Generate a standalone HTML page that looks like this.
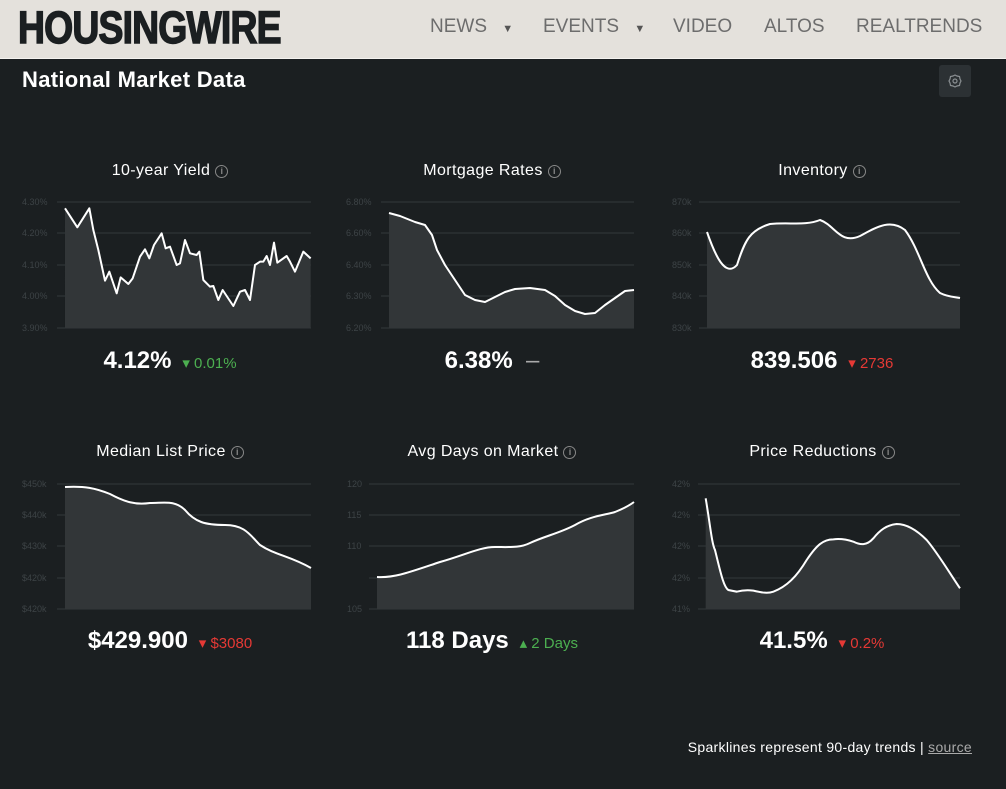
<!DOCTYPE html>
<html><head><meta charset="utf-8"><style>
body{margin:0;width:1006px;height:789px;background:#1b1f21;overflow:hidden;font-family:"Liberation Sans",sans-serif;position:relative}
.hdr{position:absolute;left:0;top:0;width:1006px;height:58px;background:#e4e1dc;border-bottom:1px solid #f4f2ef}
.logo{position:absolute;left:18px;top:5px;font-weight:bold;font-size:45px;color:#1b1f21;transform:scaleX(0.83);transform-origin:left top;letter-spacing:-1px;line-height:45px;-webkit-text-stroke:1.5px #1b1f21}
.nav{position:absolute;top:16px;font-size:19px;color:#6d6d6d}
.t{position:absolute;color:#fff;font-size:16px;letter-spacing:0.4px;text-align:center;width:300px}
.v{position:absolute;color:#fff;font-weight:bold;font-size:24px;text-align:center;width:300px}
.g{color:#4caf50;font-weight:normal;font-size:15px}
.r{color:#e53935;font-weight:normal;font-size:15px}
.i{display:inline-block;width:11px;height:11px;border:1px solid #888;border-radius:50%;font-size:9px;line-height:11px;color:#888;vertical-align:1px;margin-left:5px;font-weight:bold;letter-spacing:0}
.lb{font-family:"Liberation Sans",sans-serif;font-size:9px;fill:#3d4346}
</style></head><body>
<div class="hdr">
<div class="logo">HOUSINGWIRE</div>
<div class="nav" style="left:430px">NEWS <span style="font-size:11px;margin-left:10px;color:#555">▼</span></div>
<div class="nav" style="left:543px">EVENTS <span style="font-size:11px;margin-left:10px;color:#555">▼</span></div>
<div class="nav" style="left:673px">VIDEO</div>
<div class="nav" style="left:764px">ALTOS</div>
<div class="nav" style="left:856px">REALTRENDS</div>
</div>
<div style="position:absolute;left:22px;top:67px;color:#fff;font-weight:bold;font-size:22px;letter-spacing:0.3px">National Market Data</div>
<div style="position:absolute;left:939px;top:65px;width:32px;height:32px;background:#2c3134;border-radius:3px"></div>
<svg style="position:absolute;left:947px;top:73px" width="16" height="16" viewBox="0 0 16 16"><path d="M8 2 L10 3 L12.5 3.5 L13 6 L14 8 L13 10 L12.5 12.5 L10 13 L8 14 L6 13 L3.5 12.5 L3 10 L2 8 L3 6 L3.5 3.5 L6 3 Z" fill="none" stroke="#8a8f92" stroke-width="1.2"/><circle cx="8" cy="8" r="2" fill="none" stroke="#8a8f92" stroke-width="1.2"/></svg>

<div class="t" style="left:20px;top:162px">10-year Yield<span class="i">i</span></div>
<div class="t" style="left:342px;top:162px">Mortgage Rates<span class="i">i</span></div>
<div class="t" style="left:672px;top:162px">Inventory<span class="i">i</span></div>
<div class="t" style="left:20px;top:443px">Median List Price<span class="i">i</span></div>
<div class="t" style="left:342px;top:443px">Avg Days on Market<span class="i">i</span></div>
<div class="t" style="left:672px;top:443px">Price Reductions<span class="i">i</span></div>

<div class="v" style="left:20px;top:347px">4.12% <span class="g">&nbsp;▾ 0.01%</span></div>
<div class="v" style="left:342px;top:347px">6.38% <span style="color:#aaa;font-weight:normal">&nbsp;–</span></div>
<div class="v" style="left:672px;top:347px">839.506 <span class="r">&nbsp;▾ 2736</span></div>
<div class="v" style="left:20px;top:627px">$429.900 <span class="r">&nbsp;▾ $3080</span></div>
<div class="v" style="left:342px;top:627px">118 Days <span class="g">&nbsp;▴ 2 Days</span></div>
<div class="v" style="left:672px;top:627px">41.5% <span class="r">&nbsp;▾ 0.2%</span></div>

<svg style="position:absolute;left:0;top:0" width="1006" height="789">
<g stroke="#33393c" stroke-width="1">
<path d="M57 202H311M57 233H311M57 265H311M57 296H311M57 328H311"/>
<path d="M381 202H634M381 233H634M381 265H634M381 296H634M381 328H634"/>
<path d="M699 202H960M699 233H960M699 265H960M699 296H960M699 328H960"/>
<path d="M57 484H311M57 515H311M57 546H311M57 578H311M57 609H311"/>
<path d="M369 484H634M369 515H634M369 546H634M369 578H634M369 609H634"/>
<path d="M698 484H960M698 515H960M698 546H960M698 578H960M698 609H960"/>
</g>
<g class="lb">
<text x="22" y="205">4.30%</text><text x="22" y="236">4.20%</text><text x="22" y="268">4.10%</text><text x="22" y="299">4.00%</text><text x="22" y="331">3.90%</text>
<text x="346" y="205">6.80%</text><text x="346" y="236">6.60%</text><text x="346" y="268">6.40%</text><text x="346" y="299">6.30%</text><text x="346" y="331">6.20%</text>
<text x="672" y="205">870k</text><text x="672" y="236">860k</text><text x="672" y="268">850k</text><text x="672" y="299">840k</text><text x="672" y="331">830k</text>
<text x="22" y="487">$450k</text><text x="22" y="518">$440k</text><text x="22" y="549">$430k</text><text x="22" y="581">$420k</text><text x="22" y="612">$420k</text>
<text x="347" y="487">120</text><text x="347" y="518">115</text><text x="347" y="549">110</text><text x="347" y="612">105</text>
<text x="672" y="487">42%</text><text x="672" y="518">42%</text><text x="672" y="549">42%</text><text x="672" y="581">42%</text><text x="672" y="612">41%</text>
</g>
<g transform="translate(0,150) scale(0.33333)">
<path d="M195,175 L232,232 L268,175 L280,240 L295,300 L315,392 L328,365 L350,430 L362,382 L385,402 L398,385 L420,320 L435,298 L448,325 L462,285 L485,250 L497,295 L510,290 L530,345 L540,340 L555,270 L570,310 L590,315 L598,305 L610,390 L630,410 L640,408 L655,450 L668,420 L700,468 L720,425 L735,420 L750,450 L765,345 L780,335 L790,335 L800,318 L810,345 L822,278 L832,338 L860,318 L870,335 L885,365 L910,305 L932,325 L932,535 L195,535Z" fill="#323638"/>
<path d="M195,175 L232,232 L268,175 L280,240 L295,300 L315,392 L328,365 L350,430 L362,382 L385,402 L398,385 L420,320 L435,298 L448,325 L462,285 L485,250 L497,295 L510,290 L530,345 L540,340 L555,270 L570,310 L590,315 L598,305 L610,390 L630,410 L640,408 L655,450 L668,420 L700,468 L720,425 L735,420 L750,450 L765,345 L780,335 L790,335 L800,318 L810,345 L822,278 L832,338 L860,318 L870,335 L885,365 L910,305 L932,325" fill="none" stroke="#fff" stroke-width="6" stroke-linejoin="round"/>
</g>
<g transform="translate(660,470) scale(0.33333)">
<path d="M137,85 C150,160 155,220 165,240 C180,300 190,350 205,360 L230,365 C250,360 265,360 280,362 C300,366 320,372 340,365 C380,350 410,320 440,270 C470,225 490,208 520,208 C545,205 565,210 580,215 C600,225 620,228 640,205 C660,180 680,165 710,162 C740,162 770,180 800,210 C830,245 860,295 900,355 L900,418 L137,418Z" fill="#323638"/>
<path d="M137,85 C150,160 155,220 165,240 C180,300 190,350 205,360 L230,365 C250,360 265,360 280,362 C300,366 320,372 340,365 C380,350 410,320 440,270 C470,225 490,208 520,208 C545,205 565,210 580,215 C600,225 620,228 640,205 C660,180 680,165 710,162 C740,162 770,180 800,210 C830,245 860,295 900,355" fill="none" stroke="#fff" stroke-width="6"/>
</g>
<g fill="#323638">
<path d="M389,213 L400,216 L415,222 L425,225 L432,235 L437,250 L445,265 L455,280 L465,295 L475,300 L485,302 L495,297 L505,292 L515,289 L530,288 L545,290 L555,296 L565,305 L575,311 L585,314 L595,313 L605,305 L615,298 L625,291 L634,290 L634,328 L389,328Z"/>
<path d="M707,232 C715,255 725,278 737,265 C745,240 750,230 770,224 C790,222 805,226 820,220 C835,225 840,245 860,236 C875,228 890,218 905,230 C920,250 925,280 940,293 C948,297 955,297 960,298 L960,328 L707,328Z"/>
<path d="M65,487 C85,486 95,488 110,494 C125,502 135,505 150,503 C165,503 175,500 185,510 C195,522 205,525 225,525 C245,525 250,535 260,545 C275,555 290,556 311,568 L311,609 L65,609Z"/>
<path d="M377,577 C395,578 410,572 440,562 C465,555 480,547 495,547 C510,547 520,548 530,543 C545,536 560,533 575,525 C590,516 605,515 615,512 C625,508 630,505 634,502 L634,609 L377,609Z"/>
</g>
<g fill="none" stroke="#fff" stroke-width="2" stroke-linejoin="round">
<path d="M389,213 L400,216 L415,222 L425,225 L432,235 L437,250 L445,265 L455,280 L465,295 L475,300 L485,302 L495,297 L505,292 L515,289 L530,288 L545,290 L555,296 L565,305 L575,311 L585,314 L595,313 L605,305 L615,298 L625,291 L634,290"/>
<path d="M707,232 C715,255 725,278 737,265 C745,240 750,230 770,224 C790,222 805,226 820,220 C835,225 840,245 860,236 C875,228 890,218 905,230 C920,250 925,280 940,293 C948,297 955,297 960,298"/>
<path d="M65,487 C85,486 95,488 110,494 C125,502 135,505 150,503 C165,503 175,500 185,510 C195,522 205,525 225,525 C245,525 250,535 260,545 C275,555 290,556 311,568"/>
<path d="M377,577 C395,578 410,572 440,562 C465,555 480,547 495,547 C510,547 520,548 530,543 C545,536 560,533 575,525 C590,516 605,515 615,512 C625,508 630,505 634,502"/>
</g>
</svg>
<div style="position:absolute;right:34px;top:739px;color:#fff;font-size:14px;letter-spacing:0.3px">Sparklines represent 90-day trends | <span style="color:#aaa;text-decoration:underline">source</span></div>
</body></html>
